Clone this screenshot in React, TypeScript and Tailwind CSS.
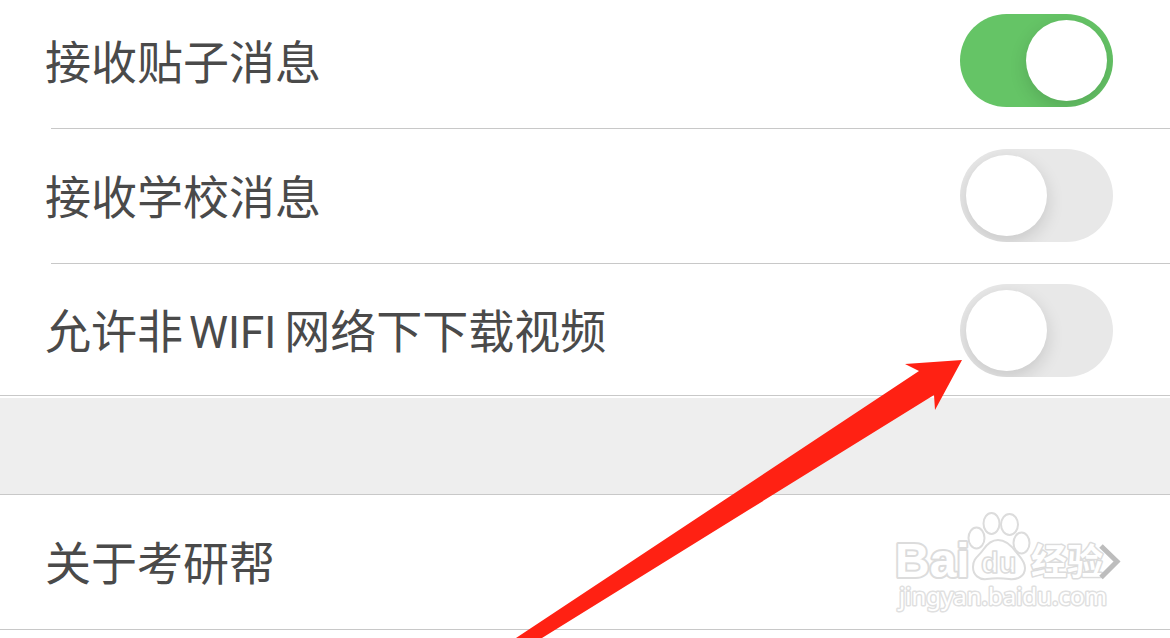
import type { ReactNode } from "react";

const labelClass =
  "pt-1 text-[46px] leading-[60px] text-[#4a4a4a] whitespace-nowrap";

function Switch({ id, defaultChecked }: { id: string; defaultChecked?: boolean }) {
  return (
    <input
      id={id}
      type="checkbox"
      role="switch"
      defaultChecked={defaultChecked}
      className="flex h-[93px] w-[153px] shrink-0 cursor-pointer appearance-none items-center overflow-hidden rounded-full bg-[#e8e8e8] px-1.5 before:block before:size-[81px] before:rounded-full before:bg-white before:shadow-[0px_6px_18px_rgba(0,0,0,0.14)] before:content-[''] checked:justify-end checked:bg-[#65c466]"
    />
  );
}

function SwitchRow({
  id,
  children,
  on,
  className,
}: {
  id: string;
  children: ReactNode;
  on?: boolean;
  className: string;
}) {
  return (
    <div className={`flex items-center justify-between pr-[57px] pl-[45px] ${className}`}>
      <label htmlFor={id} className={labelClass}>
        {children}
      </label>
      <Switch id={id} defaultChecked={on} />
    </div>
  );
}

function Watermark() {
  return (
    <svg
      className="pointer-events-none absolute top-3 right-[55px] h-[110px] w-[225px]"
      viewBox="890 507 225 110"
      fill="#ffffff"
      stroke="#dcdcdc"
      strokeWidth="2"
      strokeLinejoin="round"
      aria-hidden="true"
    >
      <text
        x="895"
        y="577"
        fontSize="48"
        fontWeight="700"
        fontFamily="'Liberation Sans', Arial, sans-serif"
        paintOrder="stroke"
        strokeWidth="4"
      >
        Bai
      </text>
      <ellipse cx="976.500" cy="538" rx="8" ry="10.500" />
      <ellipse cx="991.500" cy="523.500" rx="8" ry="10.500" />
      <ellipse cx="1009.500" cy="524.500" rx="8.500" ry="10.500" />
      <ellipse cx="1021.500" cy="543" rx="8" ry="10.500" />
      <path d="M998 540C991 540 987 544 983 550C979 556 973 558 973 567C973 575 979 580 987 579C994 578 1001 578 1009 579C1018 580 1025 576 1025 568C1025 561 1020 557 1016 552C1011 545 1006 540 998 540Z" />
      <text
        x="981"
        y="573"
        fontSize="29"
        fontWeight="700"
        fontFamily="'Liberation Sans', Arial, sans-serif"
        strokeWidth="1.500"
      >
        du
      </text>
      <text
        x="1031"
        y="575"
        fontSize="36"
        fontWeight="700"
        fontFamily="'Noto Sans CJK SC', sans-serif"
        paintOrder="stroke"
        strokeWidth="3"
      >
        经验
      </text>
      <text
        x="899"
        y="605"
        fontSize="24"
        fontFamily="'Noto Sans', sans-serif"
        paintOrder="stroke"
        stroke="#e0e0e0"
        strokeWidth="3"
      >
        jingyan.baidu.com
      </text>
    </svg>
  );
}

function Arrow() {
  return (
    <svg
      className="pointer-events-none absolute top-[360px] right-[208px] h-[278px] w-[446px]"
      viewBox="516 360 446 278"
      fill="#ff2113"
      aria-hidden="true"
    >
      <polygon points="962,360 905,364 919,371 516,638 542,638 934,395 935,410" />
    </svg>
  );
}

export default function App() {
  return (
    <main className="relative min-h-screen overflow-hidden bg-white font-['Roboto','Noto_Sans_CJK_SC',sans-serif]">
      <SwitchRow id="post-messages" on className="pt-3.5 pb-[21px]">
        接收贴子消息
      </SwitchRow>
      <hr className="ml-[51px] border-[#c8c8c8]" />
      <SwitchRow id="school-messages" className="pt-5 pb-[21px]">
        接收学校消息
      </SwitchRow>
      <hr className="ml-[51px] border-[#c8c8c8]" />
      <SwitchRow id="mobile-download" className="pt-5 pb-[18px]">
        允许非<span className="mr-2 ml-1.5 font-['Roboto'] text-[44px]">WIFI</span>网络下下载视频
      </SwitchRow>
      <hr className="border-[#c8c8c8]" />
      <div className="mt-0.5 h-24 bg-[#eeeeee]" />
      <a
        href="#about"
        className="relative flex h-[136px] items-center justify-between border-y border-[#c8c8c8] pr-[49px] pl-[45px]"
      >
        <span className={labelClass}>关于考研帮</span>
        <Watermark />
        <svg
          className="relative h-9 w-[22px]"
          viewBox="0 0 22 36"
          fill="none"
          stroke="#bdbdbd"
          strokeWidth="5"
          aria-hidden="true"
        >
          <path d="M2 2L18 17.500L2 33.500" />
        </svg>
      </a>
      <Arrow />
    </main>
  );
}
